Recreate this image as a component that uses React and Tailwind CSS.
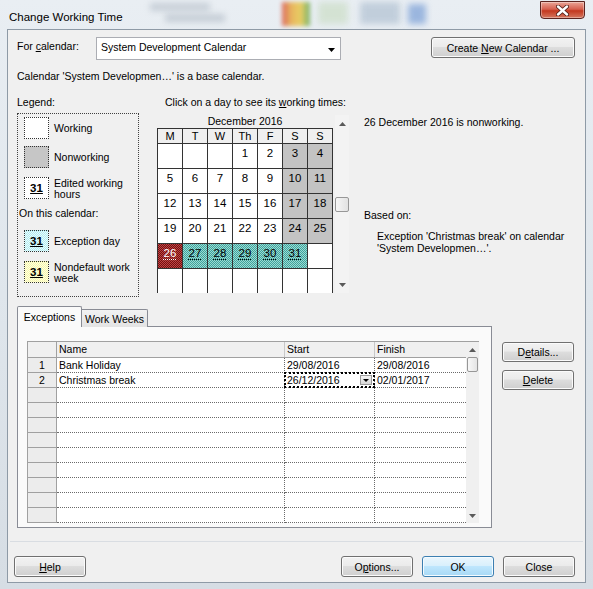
const BTN = "flex items-center justify-center rounded-[3px] border border-[#707070] bg-[linear-gradient(#f2f2f2_0%,#ebebeb_45%,#dddddd_50%,#cfcfcf_100%)] shadow-[inset_0_0_0_1px_#fbfbfb] text-[10.5px] leading-[14px]";
const TEAL = "bg-[image:repeating-conic-gradient(#3fa39b_0%_25%,#9adad4_0%_50%)] bg-[length:2px_2px]";
const RED = "bg-[image:repeating-conic-gradient(#741010_0%_25%,#bf4545_0%_50%)] bg-[length:2px_2px]";

const days = [
  ["", "", "", "1", "2", "3", "4"],
  ["5", "6", "7", "8", "9", "10", "11"],
  ["12", "13", "14", "15", "16", "17", "18"],
  ["19", "20", "21", "22", "23", "24", "25"],
  ["26", "27", "28", "29", "30", "31", ""],
  ["", "", "", "", "", "", ""],
];

function CalCell({ v, r, c }) {
  let bg = "bg-white";
  let txt = "text-black";
  let deco = "";
  if (r < 4 && c >= 5) bg = "bg-[#c3c3c3]";
  if (r === 4 && c === 0) {
    bg = RED;
    txt = "text-white";
    deco = "underline decoration-dotted underline-offset-2";
  }
  if (r === 4 && c >= 1 && c <= 5) {
    bg = TEAL;
    deco = "underline decoration-dotted underline-offset-2";
  }
  return (
    <div className={`h-[25px] border-r border-b border-[#333333] ${bg} flex justify-center pt-[2px]`}>
      <span className={`leading-[14px] text-[11.5px] ${txt} ${deco}`}>{v}</span>
    </div>
  );
}

function Tri({ up, className = "" }) {
  return (
    <svg width="7" height="4" viewBox="0 0 7 4" className={className}>
      {up ? <path d="M0 4 L3.5 0 L7 4 Z" fill="#5a5a5a" /> : <path d="M0 0 L7 0 L3.5 4 Z" fill="#5a5a5a" />}
    </svg>
  );
}

function Swatch({ className = "", children }) {
  return (
    <div className={`w-[25px] h-[22px] border border-dotted border-[#333333] flex items-center justify-center shrink-0 ${className}`}>
      {children}
    </div>
  );
}

const rows = [
  ["1", "Bank Holiday", "29/08/2016", "29/08/2016"],
  ["2", "Christmas break", "26/12/2016", "02/01/2017"],
  ["", "", "", ""],
  ["", "", "", ""],
  ["", "", "", ""],
  ["", "", "", ""],
  ["", "", "", ""],
  ["", "", "", ""],
  ["", "", "", ""],
  ["", "", "", ""],
  ["", "", "", ""],
];

export default function App() {
  return (
    <div className="relative w-[593px] h-[589px] overflow-hidden font-['Liberation_Sans',Arial,sans-serif] text-[10.5px] text-black bg-[linear-gradient(180deg,#e9eef3_0%,#dfe6ec_50%,#d6dde4_100%)]">
      {/* blurred glass background decorations */}
      <div className="absolute left-[150px] top-[3px] w-[60px] h-[8px] bg-[#b9c2cc] blur-[3px] opacity-70" />
      <div className="absolute left-[165px] top-[14px] w-[60px] h-[8px] bg-[#aeb8c3] blur-[3px] opacity-60" />
      <div className="absolute left-[282px] top-[2px] w-[28px] h-[24px] blur-[2px] bg-[linear-gradient(90deg,#d8483a,#e8a83a,#e9c640,#5aa34a)] opacity-80" />
      <div className="absolute left-[318px] top-[2px] w-[30px] h-[22px] blur-[3px] bg-[#cfe0cc] opacity-80" />
      <div className="absolute left-[360px] top-[2px] w-[40px] h-[22px] blur-[3px] bg-[#b8c7d6] opacity-80" />
      <div className="absolute left-[408px] top-[4px] w-[18px] h-[20px] blur-[3px] bg-[#7a9fd6] opacity-70" />

      <div className="relative flex flex-col h-full">
        {/* title bar */}
        <div className="h-[29px] flex items-start justify-between shrink-0">
          <span className="ml-[9px] mt-[10px] text-[11.5px] leading-[14px] text-black">Change Working Time</span>
          <div className="mr-[8px] mt-[1px] w-[45px] h-[18px] rounded-b-[4px] border border-[#5b2420] bg-[linear-gradient(#eaa597_0%,#d6604f_45%,#c3381f_55%,#d5775f_100%)] flex items-center justify-center shadow-[inset_0_0_0_1px_rgba(255,255,255,0.35)]">
            <svg width="13" height="11" viewBox="0 0 13 11">
              <path d="M2 1.5 L11 9.5 M11 1.5 L2 9.5" stroke="#4a1a14" strokeWidth="4" strokeLinecap="round" />
              <path d="M2 1.5 L11 9.5 M11 1.5 L2 9.5" stroke="#ffffff" strokeWidth="2.4" strokeLinecap="round" />
            </svg>
          </div>
        </div>

        {/* content panel */}
        <div className="mx-[7px] mb-[6px] flex-1 border border-[#8e9aa6] bg-[#f0f0f0] flex flex-col">
          {/* row 1 */}
          <div className="flex items-start pt-[7px]">
            <div className="pl-[9px] w-[88px] pt-[1px] leading-[16px]">
              For <span className="underline">c</span>alendar:
            </div>
            <div className="w-[245px] h-[23px] bg-white border border-[#abadb3] flex items-start justify-between">
              <span className="ml-[4px] mt-[2px] leading-[14px]">System Development Calendar</span>
              <svg width="7" height="4" viewBox="0 0 7 4" className="mt-[10px] mr-[5px]">
                <path d="M0 0 L7 0 L3.5 4 Z" fill="#000" />
              </svg>
            </div>
            <div className={`${BTN} ml-auto mr-[10px] w-[144px] h-[21px]`}>
              <span>
                Create <span className="underline">N</span>ew Calendar ...
              </span>
            </div>
          </div>

          {/* row 2 */}
          <div className="pl-[9px] mt-[9px] leading-[14px]">Calendar 'System Developmen…' is a base calendar.</div>

          {/* middle */}
          <div className="flex mt-[12px]">
            {/* legend */}
            <div className="ml-[9px] w-[122px]">
              <div className="leading-[14px]">Legend:</div>
              <div className="mt-[4px] h-[184px] border border-dotted border-[#404040] pl-[6px] pt-[3px]">
                <div className="flex items-center">
                  <Swatch className="bg-white" />
                  <span className="ml-[5px] leading-[14px]">Working</span>
                </div>
                <div className="flex items-center mt-[7px]">
                  <Swatch className="bg-[#c6c6c6]" />
                  <span className="ml-[5px] leading-[14px]">Nonworking</span>
                </div>
                <div className="flex items-start mt-[9px]">
                  <Swatch className="bg-white">
                    <span className="font-bold underline text-[11.5px] leading-[14px]">31</span>
                  </Swatch>
                  <span className="ml-[5px] leading-[11px] pt-[1px]">
                    Edited working
                    <br />
                    hours
                  </span>
                </div>
                <div className="ml-[-5px] mt-[7px] leading-[12px]">On this calendar:</div>
                <div className="flex items-center mt-[11px]">
                  <Swatch className="bg-[image:repeating-conic-gradient(#b4ecf0_0%_25%,#e8fcfd_0%_50%)] bg-[length:2px_2px]">
                    <span className="font-bold underline text-[11.5px] leading-[14px]">31</span>
                  </Swatch>
                  <span className="ml-[5px] leading-[14px]">Exception day</span>
                </div>
                <div className="flex items-start mt-[9px]">
                  <Swatch className="bg-[image:repeating-conic-gradient(#f6f6b0_0%_25%,#ffffdc_0%_50%)] bg-[length:2px_2px]">
                    <span className="font-bold underline text-[11.5px] leading-[14px]">31</span>
                  </Swatch>
                  <span className="ml-[5px] leading-[11px] pt-[1px]">
                    Nondefault work
                    <br />
                    week
                  </span>
                </div>
              </div>
            </div>

            {/* calendar */}
            <div className="ml-[18px] w-[192px]">
              <div className="pl-[8px] leading-[14px] whitespace-nowrap">
                Click on a day to see its <span className="underline">w</span>orking times:
              </div>
              <div className="flex">
                <div className="w-[176px]">
                  <div className="h-[19px] pt-[5px] leading-[14px] text-center">December 2016</div>
                  <div className="grid grid-cols-[repeat(7,25px)] border-l border-t border-[#333333] h-[165px] overflow-hidden">
                    {["M", "T", "W", "Th", "F", "S", "S"].map((d, i) => (
                      <div key={i} className="h-[15px] border-r border-b border-[#333333] bg-[#efefef] flex items-center justify-center text-[11px] leading-[12px]">
                        {d}
                      </div>
                    ))}
                    {days.map((row, r) => row.map((v, c) => <CalCell key={`${r}-${c}`} v={v} r={r} c={c} />))}
                  </div>
                </div>
                <div className="ml-[2px] mt-[6px] w-[14px] h-[178px] bg-[#f3f3f3] flex flex-col">
                  <div className="h-[17px] flex items-center justify-center">
                    <Tri up />
                  </div>
                  <div className="mt-[65px] h-[15px] rounded-[2px] border border-[#979797] bg-[linear-gradient(90deg,#f6f6f6,#e2e2e2)]" />
                  <div className="flex-1" />
                  <div className="h-[17px] flex items-center justify-center">
                    <Tri />
                  </div>
                </div>
              </div>
            </div>

            {/* right info */}
            <div className="ml-[15px]">
              <div className="mt-[20px] leading-[14px]">26 December 2016 is nonworking.</div>
              <div className="mt-[79px] leading-[14px]">Based on:</div>
              <div className="mt-[8px] pl-[13px] leading-[12px]">
                Exception 'Christmas break' on calendar
                <br />
                'System Developmen…'.
              </div>
            </div>
          </div>

          {/* tabs + table */}
          <div className="flex mt-[9px]">
            <div className="ml-[9px] flex flex-col">
              <div className="flex items-end h-[21px] relative z-10">
                <div className="w-[65px] h-[21px] border border-b-0 border-[#898c95] rounded-t-[2px] bg-[#fafafa] flex items-center justify-center leading-[14px]">
                  Exceptions
                </div>
                <div className="w-[66px] h-[18px] border border-l-0 border-b-0 border-[#898c95] rounded-tr-[2px] bg-[linear-gradient(#f2f2f2,#e3e3e3)] flex items-center justify-center leading-[14px]">
                  Work Weeks
                </div>
              </div>
              <div className="mt-[-1px] w-[475px] h-[202px] border border-[#898c95] bg-[#fafafa] pl-[9px] pt-[14px]">
                <div className="w-[452px] h-[182px] flex border-l border-t border-[#a0a0a0] overflow-hidden bg-white">
                  <div className="w-[438px] flex flex-col">
                    <div className="flex h-[16px] shrink-0 bg-[#f0f0f0] border-b border-[#a0a0a0] leading-[14px]">
                      <div className="w-[29px] border-r border-[#a0a0a0]" />
                      <div className="w-[228px] border-r border-[#c8c8c8] pl-[2px]">Name</div>
                      <div className="w-[90px] border-r border-[#c8c8c8] pl-[2px]">Start</div>
                      <div className="w-[91px] pl-[2px]">Finish</div>
                    </div>
                    {rows.map((r, i) => (
                      <div key={i} className="flex h-[15px] shrink-0 leading-[14px]">
                        <div className="w-[29px] bg-[#ececec] border-r border-b border-[#a0a0a0] text-center">{r[0]}</div>
                        <div className="w-[228px] border-r border-b border-dotted border-[#6a6a6a] pl-[2px]">{r[1]}</div>
                        <div className="relative w-[90px] border-r border-b border-dotted border-[#6a6a6a] pl-[2px]">
                          {r[2]}
                          {i === 1 && (
                            <div className="absolute inset-[-1px] border-2 border-dotted border-black">
                              <div className="absolute right-[1px] top-[1px] w-[12px] h-[10px] border border-[#9a9a9a] bg-[linear-gradient(#f4f4f4,#d8d8d8)] flex items-center justify-center">
                                <svg width="6" height="3" viewBox="0 0 6 3">
                                  <path d="M0 0 L6 0 L3 3 Z" fill="#000" />
                                </svg>
                              </div>
                            </div>
                          )}
                        </div>
                        <div className="w-[91px] border-b border-dotted border-[#6a6a6a] pl-[2px]">{r[3]}</div>
                      </div>
                    ))}
                  </div>
                  <div className="w-[14px] bg-[#f0f0f0] flex flex-col">
                    <div className="h-[15px] flex items-center justify-center">
                      <Tri up />
                    </div>
                    <div className="mx-[1px] h-[15px] rounded-[2px] border border-[#979797] bg-[linear-gradient(90deg,#f8f8f8,#e4e4e4)]" />
                    <div className="flex-1" />
                    <div className="h-[14px] flex items-center justify-center">
                      <Tri />
                    </div>
                  </div>
                </div>
              </div>
            </div>
            <div className="ml-[10px] pt-[36px] flex flex-col gap-[8px]">
              <div className={`${BTN} w-[72px] h-[20px]`}>
                <span>
                  D<span className="underline">e</span>tails...
                </span>
              </div>
              <div className={`${BTN} w-[72px] h-[20px]`}>
                <span>
                  <span className="underline">D</span>elete
                </span>
              </div>
            </div>
          </div>

          {/* separator */}
          <div className="mt-[13px] mx-[2px] h-px bg-[#d9dde2]" />

          {/* bottom buttons */}
          <div className="flex mt-[14px]">
            <div className={`${BTN} ml-[6px] w-[72px] h-[21px]`}>
              <span>
                <span className="underline">H</span>elp
              </span>
            </div>
            <div className={`${BTN} ml-auto w-[72px] h-[21px]`}>
              <span>
                O<span className="underline">p</span>tions...
              </span>
            </div>
            <div className="ml-[9px] w-[72px] h-[21px] rounded-[3px] border border-[#3c7fb1] bg-[linear-gradient(#eaf6fd_0%,#d9f0fc_45%,#bee6fd_50%,#a7d9f5_100%)] shadow-[inset_0_0_0_1px_#f4fbff] flex items-center justify-center leading-[14px]">
              OK
            </div>
            <div className={`${BTN} ml-[9px] mr-[10px] w-[72px] h-[21px]`}>Close</div>
          </div>
        </div>
      </div>
    </div>
  );
}
